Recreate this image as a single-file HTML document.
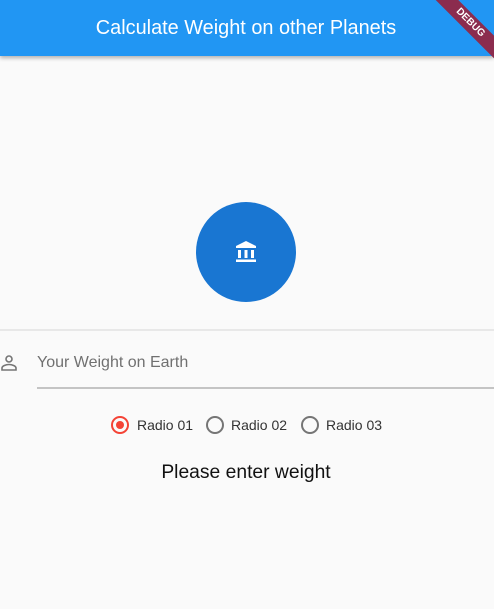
<!DOCTYPE html>
<html><head><style>
body{margin:0;width:494px;height:609px;background:#fafafa;font-family:"Liberation Sans",sans-serif;position:relative;overflow:hidden}
.bar{position:absolute;left:0;top:0;width:494px;height:56px;background:#2196f3;box-shadow:0 2px 4px rgba(0,0,0,.3);color:#fff;font-size:19.9px;text-align:center;line-height:56px}
.bar span{position:relative;left:-1px}
.debug{position:absolute;top:15px;right:-26px;width:100px;height:16px;background:#8b2c4e;transform:rotate(45deg);color:#fff;font-size:10px;font-weight:bold;text-align:center;line-height:16px;z-index:2}
.circle{position:absolute;left:196px;top:202px;width:100px;height:100px;border-radius:50%;background:#1976d2}
.line{position:absolute;left:0;top:329px;width:494px;height:2px;background:#e8e8e8}
.ph{position:absolute;left:37px;top:354px;font-size:16px;color:#707070}
.ul{position:absolute;left:37px;top:387px;width:457px;height:2px;background:#c4c4c4}
.r{position:absolute;top:416px;width:18px;height:18px;border:2px solid #757575;border-radius:50%;box-sizing:border-box}
.t{position:absolute;top:417px;font-size:14px;color:#333}
</style></head><body>
<div class="bar"><span>Calculate Weight on other Planets</span></div>
<div class="debug">DEBUG</div>
<div class="circle">
<svg style="position:absolute;left:39px;top:38px" width="22" height="24" viewBox="0 0 22 24">
<polygon points="11,1 21,6 21,8 1,8 1,6" fill="#fff"/>
<rect x="3" y="10" width="3" height="8" fill="#fff"/><rect x="9.5" y="10" width="3" height="8" fill="#fff"/><rect x="16" y="10" width="3" height="8" fill="#fff"/>
<rect x="1" y="19.5" width="20" height="2.5" fill="#fff"/></svg>
</div>
<div class="line"></div>
<svg style="position:absolute;left:0;top:354px" width="18" height="18" viewBox="0 0 18 18" fill="none" stroke="#757575" stroke-width="1.6"><circle cx="9" cy="5" r="3"/><path d="M2 16v-2c0-2 4-3.5 7-3.5s7 1.5 7 3.5v2z"/></svg>
<div class="ph">Your Weight on Earth</div>
<div class="ul"></div>
<div class="r" style="left:111px;border-color:#f44336"><div style="position:absolute;left:3px;top:3px;width:8px;height:8px;border-radius:50%;background:#f44336"></div></div>
<div class="t" style="left:137px">Radio 01</div>
<div class="r" style="left:206px"></div>
<div class="t" style="left:231px">Radio 02</div>
<div class="r" style="left:301px"></div>
<div class="t" style="left:326px">Radio 03</div>
<div style="position:absolute;left:0;width:494px;top:462px;text-align:center;font-size:19.3px;color:#111"><span style="position:relative;left:-1px">Please enter weight</span></div>
</body></html>
